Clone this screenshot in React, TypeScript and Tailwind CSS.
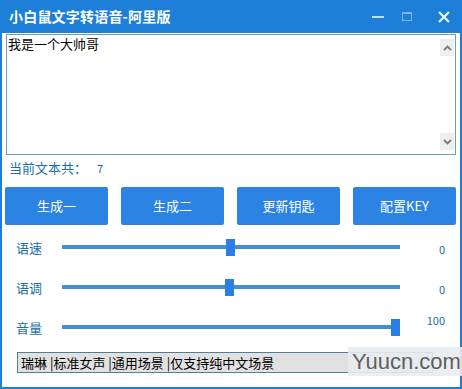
import React from "react";

const font = { fontFamily: '"Noto Sans CJK SC", "Microsoft YaHei", sans-serif' };

function Slider({ label, pos, value, valueTop }: { label: string; pos: number; value: string; valueTop?: boolean }) {
  return (
    <div className="flex items-center h-[20px]">
      <div className="w-[60px] pl-[14px] text-[13px] text-[#1a6fa6] leading-none">{label}</div>
      <div className="relative w-[338px] h-[20px] flex items-center">
        <div className="w-full h-[4px] bg-[#3f8fdc]" />
        <div
          className="absolute top-[2px] w-[9px] h-[17px] bg-[#2a7fe0]"
          style={{ left: pos }}
        />
      </div>
      <div className={`flex-1 text-right pr-[15px] text-[11px] text-[#1a6fa6] leading-none ${valueTop ? "-mt-[14px]" : "mt-[4px]"}`}>{value}</div>
    </div>
  );
}

export default function App() {
  return (
    <div className="w-[462px] h-[389px] bg-[#1e7fd8] flex flex-col" style={font}>
      <div className="h-[33px] flex items-center pl-[9px] pr-[12px]">
        <div className="text-white text-[14px] font-bold tracking-[0.2px] flex-1">小白鼠文字转语音-阿里版</div>
        <div className="flex items-center">
          <div className="w-[12px] h-[2px] bg-[#bfe0ff] mr-[18px]" />
          <div className="w-[10px] h-[9px] border border-[#7fb6ea] border-t-2 mr-[26px]" />
          <svg width="12" height="12" viewBox="0 0 12 12">
            <path d="M1 1 L11 11 M11 1 L1 11" stroke="#e8f4ff" strokeWidth="2.2" />
          </svg>
        </div>
      </div>
      <div className="flex-1 bg-white ml-[2px] mr-[2px] mb-[2px] flex flex-col">
        <div className="mt-[1px] mx-[4px] h-[121px] border border-[#6b9fb5] flex">
          <div className="flex-1 pl-[1px] pt-[1px] text-[13px] text-black leading-[16px]">我是一个大帅哥</div>
          <div className="w-[16px] flex flex-col justify-between items-center py-[4px]">
            <div className="w-[14px] h-[17px] bg-[#eeeeee] flex items-center justify-center">
              <svg width="9" height="6" viewBox="0 0 9 6"><path d="M1 5 L4.5 1.5 L8 5" stroke="#7a7a7a" strokeWidth="1.8" fill="none" /></svg>
            </div>
            <div className="w-[14px] h-[17px] bg-[#eeeeee] flex items-center justify-center">
              <svg width="9" height="6" viewBox="0 0 9 6"><path d="M1 1 L4.5 4.5 L8 1" stroke="#7a7a7a" strokeWidth="1.8" fill="none" /></svg>
            </div>
          </div>
        </div>
        <div className="flex items-center h-[22px] mt-[2px] pl-[7px] text-[13px] text-[#1a6fa6]">
          <span className="w-[88px]">当前文本共：</span>
          <span className="text-[11px]">7</span>
        </div>
        <div className="flex mt-[8px] pl-[3px] gap-[13px]">
          {["生成一", "生成二", "更新钥匙", "配置KEY"].map((t) => (
            <div key={t} className="w-[103px] h-[38px] bg-[#2b83e4] rounded-[2px] flex items-center justify-center text-white text-[13px]">
              {t}
            </div>
          ))}
        </div>
        <div className="flex flex-col mt-[12px] gap-[20px]">
          <Slider label="语速" pos={164} value="0" />
          <Slider label="语调" pos={163} value="0" />
          <Slider label="音量" pos={329} value="100" valueTop />
        </div>
        <div className="relative mt-[15px] ml-[15px] w-[416px] h-[21px] border border-[#4f7f95] bg-[#e1e1e1] flex items-center pl-[3px] text-[13px] text-black">
          瑞琳 |标准女声 |通用场景 |仅支持纯中文场景
          <div className="absolute left-[330px] top-[-6px] h-[29px] pl-[4px] pr-[8px] bg-[#e8ecf0]/90 flex items-center text-[22px] text-[#606060]" style={{ fontFamily: '"Liberation Sans", Arial, sans-serif' }}>
            Yuucn.com
          </div>
        </div>
      </div>
    </div>
  );
}
